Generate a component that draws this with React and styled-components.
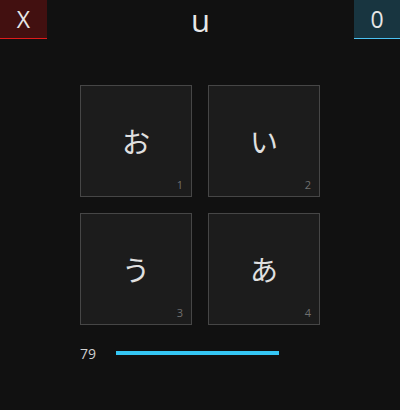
import React from "react";
import styled, { createGlobalStyle } from "styled-components";

const Global = createGlobalStyle`
  html, body { margin: 0; padding: 0; background: #111111; }
  body { font-family: "Open Sans", "Noto Sans CJK JP", sans-serif; color: #dddddd; }
`;

const Page = styled.div`
  width: 400px;
  height: 410px;
  background: #111111;
  display: flex;
  flex-direction: column;
`;

const Header = styled.header`
  display: flex;
  align-items: flex-start;
  height: 39px;
`;

const CornerBox = styled.div`
  width: ${(p) => p.$w}px;
  height: 38px;
  border-bottom: 1px solid ${(p) => p.$line};
  background: ${(p) => p.$bg};
  display: flex;
  align-items: center;
  justify-content: center;
  font-size: 23px;
  color: #e6e6e6;
  line-height: 1;
`;

const Title = styled.div`
  flex: 1;
  text-align: center;
  font-size: 31px;
  line-height: 38px;
  color: #e8e8e8;
  padding-top: 1px;
`;

const Grid = styled.div`
  margin: 46px auto 0;
  display: grid;
  grid-template-columns: repeat(2, 112px);
  grid-auto-rows: 112px;
  gap: 16px;
`;

const Tile = styled.button`
  position: relative;
  box-sizing: border-box;
  border: 1px solid #464646;
  background: #1c1c1c;
  display: flex;
  align-items: center;
  justify-content: center;
  font-family: "Noto Sans CJK JP", sans-serif;
  font-size: 28px;
  color: #e0e0e0;
  padding: 0;
  cursor: pointer;
`;

const Key = styled.span`
  position: absolute;
  right: 8px;
  bottom: 6px;
  font-family: "Open Sans", sans-serif;
  font-size: 11px;
  color: #707070;
  line-height: 1;
`;

const Progress = styled.div`
  display: flex;
  align-items: center;
  height: 20px;
  margin: 18px 0 0 80px;
  gap: 20px;
`;

const Count = styled.span`
  width: 16px;
  font-size: 14px;
  color: #cfcfcf;
`;

const Track = styled.div`
  width: 163px;
  height: 4px;
  background: #1b1b1b;
`;

const Fill = styled.div`
  height: 100%;
  background: #35c6f4;
`;

const kana = ["お", "い", "う", "あ"];

export default function App() {
  return (
    <>
      <Global />
      <Page>
        <Header>
          <CornerBox $w={47} $bg="#421010" $line="#e01b1b">X</CornerBox>
          <Title>u</Title>
          <CornerBox $w={46} $bg="#183540" $line="#4cc2f2">0</CornerBox>
        </Header>
        <Grid>
          {kana.map((k, i) => (
            <Tile key={k}>
              {k}
              <Key>{i + 1}</Key>
            </Tile>
          ))}
        </Grid>
        <Progress>
          <Count>79</Count>
          <Track>
            <Fill style={{ width: "100%" }} />
          </Track>
        </Progress>
      </Page>
    </>
  );
}
